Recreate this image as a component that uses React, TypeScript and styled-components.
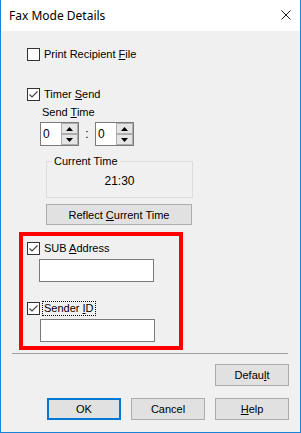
import React from 'react'
import styled, { createGlobalStyle } from 'styled-components'

const GlobalStyle = createGlobalStyle`
  html, body {
    margin: 0;
    padding: 0;
    background: #ffffff;
  }
  * {
    box-sizing: border-box;
  }
`

function App() {
  return (
    <>
      <GlobalStyle />
      <DialogWindow>
        <TitleBar>
          <TitleText>Fax Mode Details</TitleText>
          <CloseButton>
            <svg width="10" height="10" viewBox="0 0 10 10">
              <path d="M0.5 0.5 L9.5 9.5 M9.5 0.5 L0.5 9.5" stroke="#1a1a1a" strokeWidth="1" fill="none" />
            </svg>
          </CloseButton>
        </TitleBar>

        <DialogBody>
          <CheckRow $top={17} $left={26}>
            <CheckBox />
            <CheckLabel>Print Recipient <u>F</u>ile</CheckLabel>
          </CheckRow>

          <CheckRow $top={27} $left={26}>
            <CheckBox $checked />
            <CheckLabel>Timer <u>S</u>end</CheckLabel>
          </CheckRow>

          <FieldLabel>Send <u>T</u>ime</FieldLabel>

          <SpinRow>
            <Spinner value="0" />
            <Colon>:</Colon>
            <Spinner value="0" />
          </SpinRow>

          <GroupBox>
            <GroupLegend>Current Time</GroupLegend>
            <GroupValue>21:30</GroupValue>
          </GroupBox>

          <WideButton>
            <span>Reflect <u>C</u>urrent Time</span>
          </WideButton>

          <HighlightBox>
            <CheckRow $top={6} $left={4}>
              <CheckBox $checked />
              <CheckLabel>SUB <u>A</u>ddress</CheckLabel>
            </CheckRow>
            <TextField $top={4} $left={16} />
            <CheckRow $top={20} $left={4}>
              <CheckBox $checked />
              <CheckLabel $focused>Sender <u>I</u>D</CheckLabel>
            </CheckRow>
            <TextField $top={4} $left={17} />
          </HighlightBox>

          <Separator />

          <ButtonRow $top={10}>
            <PushButton><span>Defau<u>l</u>t</span></PushButton>
          </ButtonRow>

          <ButtonRow $top={12}>
            <PushButton $default><span>OK</span></PushButton>
            <PushButton><span>Cancel</span></PushButton>
            <PushButton><span><u>H</u>elp</span></PushButton>
          </ButtonRow>
        </DialogBody>
      </DialogWindow>
    </>
  )
}

function CheckBox({ $checked }: { $checked?: boolean }) {
  return (
    <CheckSquare>
      {$checked && (
        <svg width="11" height="11" viewBox="0 0 11 11">
          <path d="M1.5 5.5 L4 8 L9.5 2.5" stroke="#444444" strokeWidth="1.2" fill="none" />
        </svg>
      )}
    </CheckSquare>
  )
}

function Spinner({ value }: { value: string }) {
  return (
    <SpinBox>
      <SpinInput>{value}</SpinInput>
      <SpinButtons>
        <SpinArrow>
          <svg width="7" height="4" viewBox="0 0 7 4">
            <path d="M3.5 0 L7 4 L0 4 Z" fill="#000" />
          </svg>
        </SpinArrow>
        <SpinArrow>
          <svg width="7" height="4" viewBox="0 0 7 4">
            <path d="M0 0 L7 0 L3.5 4 Z" fill="#000" />
          </svg>
        </SpinArrow>
      </SpinButtons>
    </SpinBox>
  )
}

export default App

const DialogWindow = styled.div`
  width: 301px;
  height: 433px;
  border: 1px solid #1883d7;
  border-top: none;
  background: #f0f0f0;
  display: flex;
  flex-direction: column;
  font-family: "Liberation Sans", Arial, sans-serif;
  font-size: 11px;
  color: #000;
`

const TitleBar = styled.div`
  height: 31px;
  background: #ffffff;
  display: flex;
  align-items: center;
  justify-content: space-between;
  padding: 0 9px 0 8px;
  flex-shrink: 0;
`

const TitleText = styled.span`
  font-family: "Segoe UI", "Noto Sans", sans-serif;
  font-size: 12px;
  color: #000;
`

const CloseButton = styled.span`
  display: flex;
  margin-top: -1px;
`

const DialogBody = styled.div`
  flex: 1;
  display: flex;
  flex-direction: column;
  align-items: flex-start;
`

const CheckRow = styled.div<{ $top: number; $left: number }>`
  display: flex;
  align-items: center;
  height: 13px;
  margin-top: ${p => p.$top}px;
  margin-left: ${p => p.$left}px;
  gap: 3px;
`

const CheckSquare = styled.span`
  width: 13px;
  height: 13px;
  border: 1px solid #333333;
  background: #ffffff;
  display: flex;
  align-items: center;
  justify-content: center;
`

const CheckLabel = styled.span<{ $focused?: boolean }>`
  line-height: 13px;
  padding: 0 1px;
  outline: ${p => (p.$focused ? '1px dotted #000' : 'none')};
  outline-offset: 0;
`

const FieldLabel = styled.div`
  margin-top: 5px;
  margin-left: 41px;
  line-height: 13px;
`

const SpinRow = styled.div`
  display: flex;
  align-items: center;
  margin-top: 3px;
  margin-left: 39px;
`

const SpinBox = styled.div`
  display: flex;
  width: 39px;
  height: 24px;
  border: 1px solid #7a7a7a;
  background: #ffffff;
`

const SpinInput = styled.div`
  flex: 1;
  padding: 4px 0 0 2px;
  font-size: 12px;
`

const SpinButtons = styled.div`
  width: 17px;
  display: flex;
  flex-direction: column;
`

const SpinArrow = styled.div`
  flex: 1;
  border: 1px solid #adadad;
  background: #e5e5e5;
  display: flex;
  align-items: center;
  justify-content: center;
`

const Colon = styled.span`
  width: 16px;
  text-align: center;
  font-size: 12px;
`

const GroupBox = styled.div`
  position: relative;
  margin-top: 15px;
  margin-left: 45px;
  width: 147px;
  height: 37px;
  border: 1px solid #dcdcdc;
  display: flex;
  align-items: center;
  justify-content: center;
  padding-top: 3px;
`

const GroupLegend = styled.span`
  position: absolute;
  top: -7px;
  left: 5px;
  padding: 0 2px;
  background: #f0f0f0;
  line-height: 13px;
`

const GroupValue = styled.span`
  font-size: 12px;
`

const WideButton = styled.div`
  margin-top: 6px;
  margin-left: 45px;
  width: 146px;
  height: 21px;
  border: 1px solid #adadad;
  background: #e1e1e1;
  display: flex;
  align-items: center;
  justify-content: center;
`

const HighlightBox = styled.div`
  margin-top: 7px;
  margin-left: 18px;
  width: 164px;
  height: 118px;
  border: 4px solid #ff0000;
  display: flex;
  flex-direction: column;
  align-items: flex-start;
`

const TextField = styled.div<{ $top: number; $left: number }>`
  margin-top: ${p => p.$top}px;
  margin-left: ${p => p.$left}px;
  width: 115px;
  height: 23px;
  border: 1px solid #7a7a7a;
  background: #ffffff;
`

const Separator = styled.div`
  margin-top: 3px;
  margin-left: 11px;
  width: 276px;
  height: 1px;
  background: #a0a0a0;
`

const ButtonRow = styled.div<{ $top: number }>`
  align-self: stretch;
  display: flex;
  justify-content: flex-end;
  gap: 10px;
  margin-top: ${p => p.$top}px;
  padding-right: 11px;
`

const PushButton = styled.div<{ $default?: boolean }>`
  width: 74px;
  height: 22px;
  border: ${p => (p.$default ? '2px solid #0078d7' : '1px solid #adadad')};
  background: #e1e1e1;
  display: flex;
  align-items: center;
  justify-content: center;
`
